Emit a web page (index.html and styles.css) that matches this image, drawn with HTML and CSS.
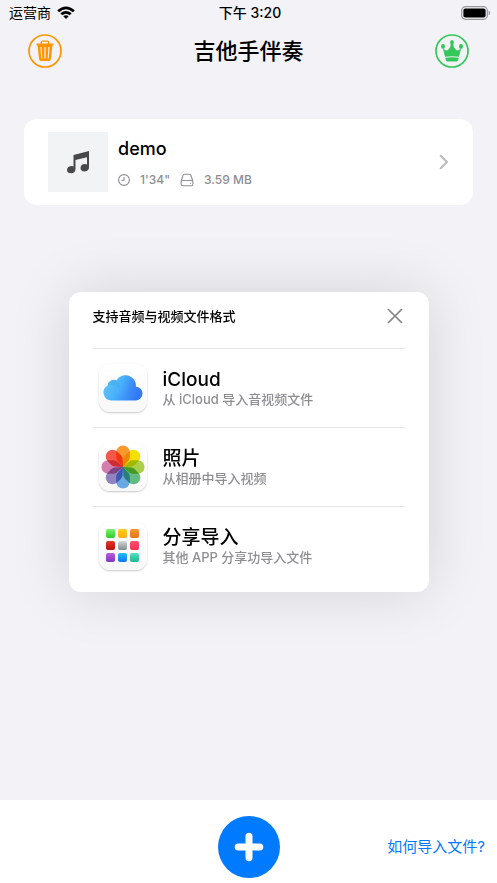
FILE: index.html
```html
<!DOCTYPE html>
<html lang="zh-CN">
<head>
    <meta charset="UTF-8">
    <meta name="viewport" content="width=device-width, initial-scale=1">
    <title>吉他手伴奏</title>
    <link rel="stylesheet" href="styles.css">
</head>
<body>
    <div class="status-bar">
        <div class="carrier">
            <span>运营商</span>
            <svg width="18" height="14" viewBox="0 0 18 14">
                <path d="M0.2 4.2Q9 -3.4 17.8 4.2L15.8 6.2Q9 0.4 2.2 6.2Z"/>
                <path d="M3.3 7.3Q9 2.5 14.7 7.3L12.7 9.3Q9 6.2 5.3 9.3Z"/>
                <path d="M6.3 10.3Q9 8.1 11.7 10.3L9 13Z"/>
            </svg>
        </div>
        <span class="clock">下午 3:20</span>
        <div class="battery">
            <svg width="30" height="14" viewBox="0 0 30 14">
                <rect x="0.7" y="0.7" width="25.6" height="12.6" rx="3.8" fill="none" stroke="#97979b" stroke-width="1.2"/>
                <rect x="2.4" y="2.4" width="22.2" height="9.2" rx="2"/>
                <path d="M27.7 4.8Q29.2 5.4 29.2 7Q29.2 8.6 27.7 9.2Z" fill="#97979b"/>
            </svg>
        </div>
    </div>

    <header class="nav">
        <button class="icon-button" aria-label="删除">
            <svg width="34" height="34" viewBox="0 0 34 34" fill="none" stroke="#ff9500">
                <circle cx="17" cy="17" r="16" stroke-width="1.7"/>
                <path d="M13.3 10V8.4Q13.3 7.1 14.6 7.1H19.4Q20.7 7.1 20.7 8.4V10" stroke-width="1.3"/>
                <path fill="#ff9500" stroke="none" fill-rule="evenodd" d="M8.5 9.6H25.5V11.3H24.5L22.9 25.3Q22.7 27 21.1 27H12.9Q11.3 27 11.1 25.3L9.5 11.3H8.5ZM12.4 13L13.3 24.5H14.3L13.6 13ZM16.4 13V24.5H17.6V13ZM20.4 13L19.7 24.5H20.7L21.6 13Z"/>
            </svg>
        </button>
        <h1>吉他手伴奏</h1>
        <button class="icon-button" aria-label="会员">
            <svg width="34" height="34" viewBox="0 0 34 34" fill="#34c759">
                <circle cx="17" cy="17" r="16" fill="none" stroke="#34c759" stroke-width="1.7"/>
                <ellipse cx="17" cy="8.5" rx="1.9" ry="2.5"/>
                <ellipse cx="8" cy="12.4" rx="2" ry="2.3"/>
                <ellipse cx="26" cy="12.4" rx="2" ry="2.3"/>
                <path d="M7.7 13.6Q10.6 18 13.4 15.6Q15.6 13.8 16 9.8H18Q18.4 13.8 20.6 15.6Q23.4 18 26.3 13.6L24 22.8Q17 21.8 10 22.8Z"/>
                <path d="M10.2 23.7Q17 22.7 23.8 23.7L23 26.4Q22.6 27.4 21.6 27.4H12.4Q11.4 27.4 11 26.4Z"/>
            </svg>
        </button>
    </header>

    <main class="songs">
        <a class="song" href="#">
            <div class="cover">
                <svg width="24" height="24" viewBox="0 0 24 24" fill="#48484a">
                    <path d="M7.5 5.1L23 1V17.3Q23 21.4 18.5 21.4Q14.6 21.3 14.5 18Q14.7 14.1 19 14Q20.2 14 21 14.5V7.2L9.5 9.9V19.2Q9.2 23 5 23.2Q1.2 23.2 1 20Q1 16.5 5.3 16Q6.7 15.9 7.5 16.5Z"/>
                </svg>
            </div>
            <div class="song-info">
                <h2>demo</h2>
                <div class="meta">
                    <svg width="12" height="12" viewBox="0 0 14 14" fill="none" stroke="#8e8e93" stroke-width="1.3">
                        <circle cx="7" cy="7" r="6.3"/>
                        <path d="M7 3.5V7.3H3.8"/>
                    </svg>
                    <span>1'34"</span>
                    <svg width="14" height="14" viewBox="0 0 14 14" fill="none" stroke="#8e8e93" stroke-width="1.1">
                        <path d="M1.2 8L3 2.4Q3.4 1.2 4.6 1.2H9.4Q10.6 1.2 11 2.4L12.8 8"/>
                        <rect x="1.1" y="7.5" width="11.8" height="5.3" rx="1.8"/>
                        <path d="M9.9 10.2H11"/>
                    </svg>
                    <span>3.59 MB</span>
                </div>
            </div>
            <svg class="chevron" width="10" height="16" viewBox="0 0 10 16" fill="none" stroke="#bcbcc0" stroke-width="2.2" stroke-linecap="round" stroke-linejoin="round">
                <path d="M1.7 1.8L8 8L1.7 14.2"/>
            </svg>
        </a>
    </main>

    <footer class="toolbar">
        <button class="add-button" aria-label="导入">
            <svg width="30" height="30" viewBox="0 0 30 30" stroke="#fff" stroke-width="7" stroke-linecap="round">
                <path d="M15 4.2V25.8M4.2 15H25.8"/>
            </svg>
        </button>
        <a class="help-link" href="#">如何导入文件?</a>
    </footer>

    <div class="overlay">
        <section class="dialog" role="dialog" aria-labelledby="dialog-title">
            <div class="dialog-header">
                <h2 id="dialog-title">支持音频与视频文件格式</h2>
                <button class="close-button" aria-label="关闭">
                    <svg width="16" height="16" viewBox="0 0 16 16" stroke="#818186" stroke-width="1.6" stroke-linecap="round">
                        <path d="M1.5 1.5L14.5 14.5M14.5 1.5L1.5 14.5"/>
                    </svg>
                </button>
            </div>
            <button class="source">
                <span class="source-icon">
                    <svg width="40" height="28" viewBox="0 0 40 28">
                        <defs>
                            <linearGradient id="cloud" x1="0" y1="0" x2="1" y2="0.3">
                                <stop offset="0" stop-color="#6bcbf8"/>
                                <stop offset="0.5" stop-color="#47aefb"/>
                                <stop offset="1" stop-color="#3478f6"/>
                            </linearGradient>
                        </defs>
                        <path fill="url(#cloud)" d="M8.4 26.4A7.9 7.9 0 0 1 4.6 11.6A6.2 6.2 0 0 1 13.4 6.5A10.4 10.4 0 0 1 32.8 12.8A6.8 6.8 0 0 1 32.6 26.4Z"/>
                        <path fill="#38aadf" fill-opacity="0.4" d="M4.6 11.6A6.2 6.2 0 0 1 13.4 6.5Q11.9 9.2 12.4 12.2Q9 10.3 4.6 11.6Z"/>
                        <path fill="#2d9be0" fill-opacity="0.35" d="M13.4 6.5Q17.4 8.4 16.6 12.5Q15.2 14.8 12.4 12.2Q11.9 9.2 13.4 6.5Z"/>
                        <circle cx="22.5" cy="11.5" r="10.4" fill="url(#cloud)" fill-opacity="0.3"/>
                    </svg>
                </span>
                <span class="source-text">
                    <span class="source-name">iCloud</span>
                    <span class="source-desc">从 iCloud 导入音视频文件</span>
                </span>
            </button>
            <button class="source">
                <span class="source-icon">
                    <svg class="petals" width="44" height="44" viewBox="-22 -22 44 44">
                        <defs>
                            <path id="petal" d="M0 0L-5.6 -6.2Q-6.8 -7.7 -6.8 -10V-14.8A6.8 6.8 0 0 1 6.8 -14.8V-10Q6.8 -7.7 5.6 -6.2Z"/>
                        </defs>
                        <use href="#petal" fill="#fb9a2e"/>
                        <use href="#petal" fill="#f5e100" transform="rotate(45)"/>
                        <use href="#petal" fill="#add34a" transform="rotate(90)"/>
                        <use href="#petal" fill="#63bf86" transform="rotate(135)"/>
                        <use href="#petal" fill="#6aabe8" transform="rotate(180)"/>
                        <use href="#petal" fill="#9586c4" transform="rotate(225)"/>
                        <use href="#petal" fill="#d781b0" transform="rotate(270)"/>
                        <use href="#petal" fill="#f8584b" transform="rotate(315)"/>
                    </svg>
                </span>
                <span class="source-text">
                    <span class="source-name">照片</span>
                    <span class="source-desc">从相册中导入视频</span>
                </span>
            </button>
            <button class="source">
                <span class="source-icon apps">
                    <span class="app green"></span>
                    <span class="app yellow"></span>
                    <span class="app orange"></span>
                    <span class="app red"></span>
                    <span class="app gray"></span>
                    <span class="app pink"></span>
                    <span class="app purple"></span>
                    <span class="app blue"></span>
                    <span class="app teal"></span>
                </span>
                <span class="source-text">
                    <span class="source-name">分享导入</span>
                    <span class="source-desc">其他 APP 分享功导入文件</span>
                </span>
            </button>
        </section>
    </div>
</body>
</html>
```
FILE: styles.css
```css
* {
    box-sizing: border-box;
}
body {
    min-height: 100vh;
    margin: 0;
    display: flex;
    flex-direction: column;
    background-color: #f2f2f7;
    color: #000;
    font-family: Inter, "Noto Sans CJK SC", sans-serif;
}
h1, h2 {
    margin: 0;
    font-weight: 500;
}
button {
    padding: 0;
    border: 0;
    background: none;
    color: inherit;
    font: inherit;
    cursor: pointer;
}
a {
    color: inherit;
    text-decoration: none;
}
svg {
    display: block;
    flex: none;
}

/* status bar */
.status-bar {
    height: 26px;
    padding: 0 6px 0 9px;
    display: grid;
    grid-template-columns: 1fr auto 1fr;
    align-items: center;
    font-size: 14px;
    line-height: 20px;
}
.carrier {
    display: flex;
    align-items: center;
    gap: 6px;
}
.clock {
    font-weight: 500;
}
.battery {
    justify-self: end;
}

/* navigation */
.nav {
    height: 50px;
    padding: 0 28px;
    display: flex;
    align-items: center;
    justify-content: space-between;
}
.nav h1 {
    font-size: 22px;
    line-height: 32px;
}

/* song list */
.songs {
    flex: 1;
    padding: 43px 24px;
}
.song {
    padding: 13px 24px;
    display: flex;
    align-items: center;
    background-color: #fff;
    border-radius: 13px;
}
.cover {
    width: 60px;
    height: 60px;
    display: flex;
    align-items: center;
    justify-content: center;
    background-color: #f2f3f5;
}
.song-info {
    flex: 1;
    padding-left: 10px;
}
.song-info h2 {
    font-size: 18px;
    line-height: 26px;
    margin-bottom: 10px;
}
.meta {
    display: flex;
    align-items: center;
    gap: 10px;
    color: #8e8e93;
    font-size: 12px;
    font-weight: 500;
    line-height: 16px;
}

/* bottom bar */
.toolbar {
    height: 83px;
    padding: 0 12px;
    display: grid;
    grid-template-columns: 1fr auto 1fr;
    align-items: center;
    background-color: #fff;
}
.add-button {
    grid-column: 2;
    width: 62px;
    height: 62px;
    margin-top: 10px;
    display: flex;
    align-items: center;
    justify-content: center;
    border-radius: 50%;
    background-color: #007aff;
}
.help-link {
    justify-self: end;
    margin-top: 10px;
    color: #007aff;
    font-size: 15px;
    line-height: 20px;
}

/* import dialog */
.overlay {
    position: fixed;
    inset: 0;
    display: flex;
    align-items: center;
    justify-content: center;
}
.dialog {
    width: 360px;
    max-width: 90%;
    padding: 0 24px 7px;
    background-color: #fff;
    border-radius: 12px;
    box-shadow: 0 0 60px rgba(0, 0, 0, 0.13);
}
.dialog-header {
    height: 56px;
    padding-bottom: 8px;
    display: flex;
    align-items: center;
    justify-content: space-between;
}
.dialog-header h2 {
    font-size: 13px;
    line-height: 20px;
}
.close-button {
    padding: 2px;
}
.source {
    width: 100%;
    height: 79px;
    padding-left: 6px;
    display: flex;
    align-items: center;
    gap: 16px;
    border-top: 1px solid #e5e5ea;
    text-align: left;
}
.source-icon {
    width: 48px;
    height: 48px;
    display: flex;
    align-items: center;
    justify-content: center;
    border-radius: 11px;
    background: linear-gradient(#fff, #f8f8f8);
    box-shadow: 0 1px 2px rgba(0, 0, 0, 0.22);
}
.petals use {
    mix-blend-mode: multiply;
}
.source-text {
    display: flex;
    flex-direction: column;
}
.source-name {
    font-size: 19px;
    font-weight: 500;
    line-height: 22px;
}
.source-desc {
    color: #8e8e93;
    font-size: 13px;
    font-weight: 500;
    line-height: 16px;
}
.apps {
    display: grid;
    grid-template-columns: repeat(3, 9px);
    gap: 3px;
    align-content: center;
}
.app {
    height: 9px;
    border-radius: 2px;
}
.green { background: linear-gradient(#7af36c, #2bcb27); }
.yellow { background: linear-gradient(#ffce1c, #ffad0c); }
.orange { background: linear-gradient(#f99b22, #e9731c); }
.red { background: linear-gradient(#e53529, #b5120d); }
.gray { background: linear-gradient(#d1dade, #80898b); }
.pink { background: linear-gradient(#ff4d70, #f92f51); }
.purple { background: linear-gradient(#b75cde, #8537c0); }
.blue { background: linear-gradient(#20bdf8, #0f75fa); }
.teal { background: linear-gradient(#54dfc5, #18ba8d); }
```
